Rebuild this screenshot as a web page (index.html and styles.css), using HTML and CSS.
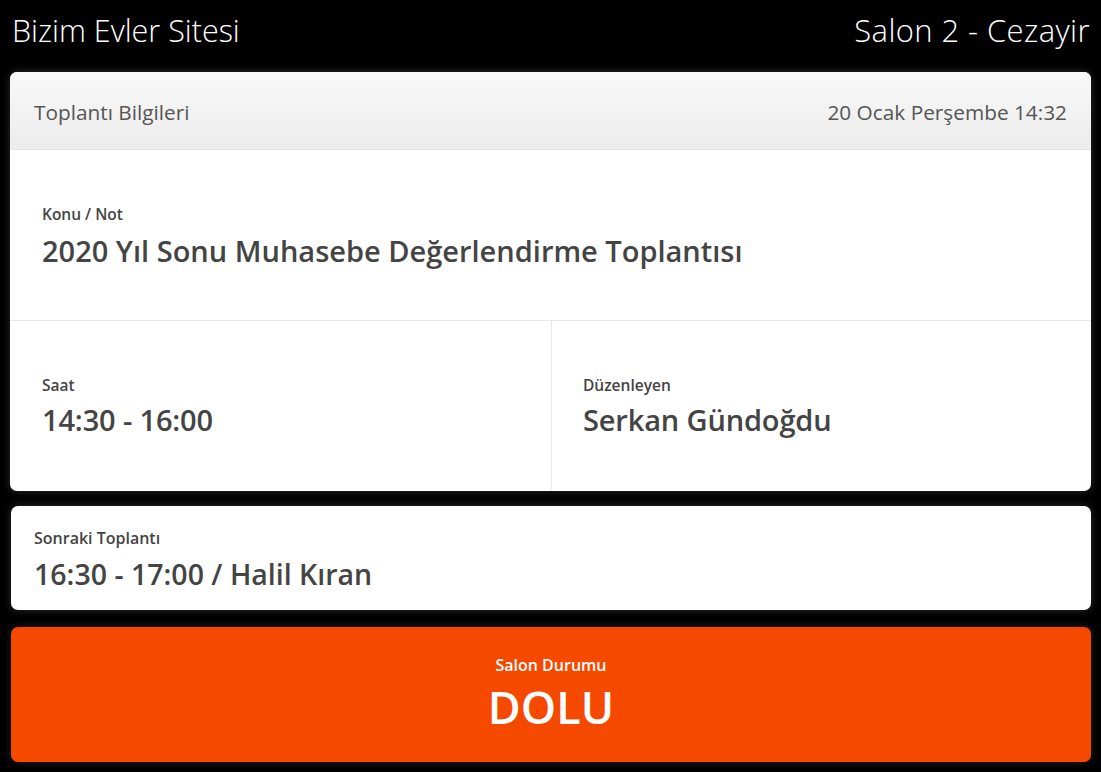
FILE: index.html
```html
<!DOCTYPE html>
<html lang="tr">
<head>
<meta charset="utf-8">
<title>Bizim Evler Sitesi</title>
<link rel="stylesheet" href="styles.css">
</head>
<body>
<header class="topbar">
  <div class="site">Bizim Evler Sitesi</div>
  <div class="room">Salon 2 - Cezayir</div>
</header>
<main class="content">
  <section class="card info">
    <div class="card-head">
      <span>Toplantı Bilgileri</span>
      <span>20 Ocak Perşembe 14:32</span>
    </div>
    <div class="block topic">
      <div class="label">Konu / Not</div>
      <div class="value title">2020 Yıl Sonu Muhasebe Değerlendirme Toplantısı</div>
    </div>
    <div class="row">
      <div class="block cell">
        <div class="label">Saat</div>
        <div class="value big">14:30 - 16:00</div>
      </div>
      <div class="block cell">
        <div class="label">Düzenleyen</div>
        <div class="value big">Serkan Gündoğdu</div>
      </div>
    </div>
  </section>
  <section class="card next">
    <div class="label">Sonraki Toplantı</div>
    <div class="value next-val">16:30 - 17:00 / Halil Kıran</div>
  </section>
  <section class="status">
    <div class="status-label">Salon Durumu</div>
    <div class="status-val">DOLU</div>
  </section>
</main>
</body>
</html>
```
FILE: styles.css
```css
* { box-sizing: border-box; }
html, body { margin: 0; padding: 0; background: #000; }
body {
  width: 1101px;
  height: 772px;
  overflow: hidden;
  font-family: "Open Sans", "Noto Sans", sans-serif;
  color: #444;
  padding: 0 10px 10px 10px;
}
.topbar {
  height: 62px;
  display: flex;
  justify-content: space-between;
  align-items: center;
  padding: 0 1px 2px 2px;
  color: #fff;
  font-weight: 300;
  font-size: 30.5px;
}
.room { font-size: 31px; letter-spacing: 0.4px; }
.content {
  margin-top: 10px;
  display: flex;
  flex-direction: column;
}
.card {
  background: #fff;
  border-radius: 7px;
  box-shadow: 0 0 8px rgba(255,255,255,0.18);
}
.info { height: 419px; display: flex; flex-direction: column; overflow: hidden; }
.card-head {
  height: 78px;
  flex: none;
  display: flex;
  justify-content: space-between;
  align-items: center;
  padding: 2px 24px 0 24px;
  background: linear-gradient(#f9f9f9, #ececec);
  border-bottom: 1px solid #e3e3e3;
  color: #555;
  font-size: 20.8px;
}
.block {
  display: flex;
  flex-direction: column;
  justify-content: center;
  padding-left: 32px;
}
.topic { height: 171px; border-bottom: 1px solid #e8e8e8; flex: none; padding-top: 5px; }
.row { flex: 1; display: flex; }
.cell { flex: none; width: 541px; height: 100%; padding-top: 3px; }
.cell + .cell { width: 540px; border-left: 1px solid #e8e8e8; padding-left: 31px; }
.label {
  font-size: 15.5px;
  font-weight: 600;
  color: #444;
  line-height: 20px;
}
.value {
  font-weight: 600;
  color: #444;
}
.title { font-size: 29px; line-height: 40px; margin-top: 7px; }
.big { font-size: 29px; line-height: 40px; margin-top: 5px; letter-spacing: -0.15px; }
.next {
  margin-top: 15px;
  height: 104px;
  margin-left: 1px;
  display: flex;
  flex-direction: column;
  justify-content: center;
  padding-left: 23px;
  padding-top: 6px;
}
.next .label { font-size: 16px; }
.next-val { font-size: 28.5px; line-height: 40px; margin-top: 6px; }
.status {
  margin-top: 17px;
  margin-left: 1px;
  height: 135px;
  background: #f54900;
  border-radius: 7px;
  box-shadow: 0 0 8px rgba(255,255,255,0.15);
  display: flex;
  flex-direction: column;
  align-items: center;
  justify-content: center;
  color: #fff;
  padding-top: 2px;
}
.status-label { font-size: 16px; font-weight: 600; line-height: 22px; }
.status-val { font-size: 45px; font-weight: 600; line-height: 62px; }
```
